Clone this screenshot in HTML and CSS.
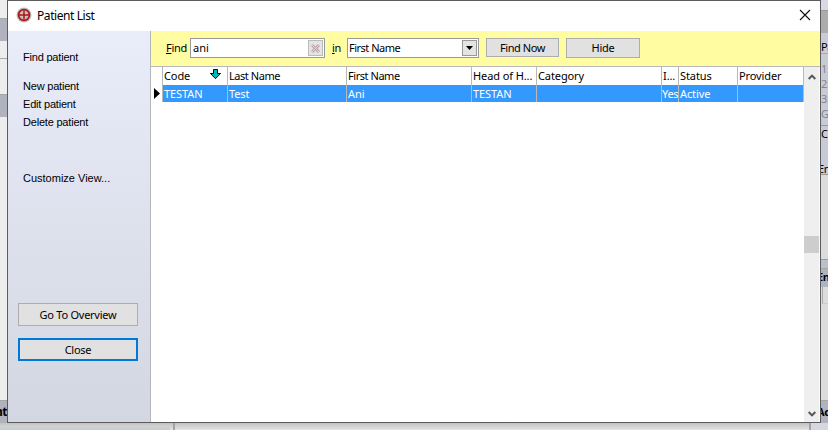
FILE: index.html
```html
<!DOCTYPE html>
<html lang="en">
<head>
<meta charset="utf-8">
<title>Patient List</title>
<link rel="stylesheet" href="styles.css">
</head>
<body>
<div class="desktop">
  <div class="strip left">
    <div class="l1"></div><div class="bar l2"></div><div class="l3"></div><div class="l4"></div><div class="bar l5"></div><div class="l6"></div><div class="bar l7"><b>nt</b></div>
  </div>
  <main class="window">
    <header class="titlebar">
      <svg class="logo" width="16" height="16" viewBox="0 0 16 16"><circle cx="8" cy="8" r="7.5" fill="#bdb9b8"/><circle cx="8" cy="8" r="5.4" fill="#d2bcbb" stroke="#a5191d" stroke-width="1.7"/><path d="M3 8h10M8 3.5v3.2q0 1.3-1.3 1.3M8 12.5V9.3Q8 8 9.3 8" fill="none" stroke="#a5191d" stroke-width="1.5"/></svg>
      <h1>Patient List</h1>
      <svg class="x" width="12" height="12" viewBox="0 0 12 12"><path d="M1 1l10 10M11 1L1 11" stroke="#111" stroke-width="1.1"/></svg>
    </header>
    <div class="content">
      <nav class="sidebar">
        <a class="find">Find patient</a>
        <a>New patient</a>
        <a>Edit patient</a>
        <a>Delete patient</a>
        <a class="customize">Customize View...</a>
        <button class="overview"><span>Go To Overview</span></button>
        <button class="close"><span>Close</span></button>
      </nav>
      <section class="main">
        <div class="search">
          <label class="lf"><u>F</u>ind</label>
          <div class="field"><span>ani</span><i class="clear"><svg width="9" height="9" viewBox="0 0 9 9"><path d="M1 1l7 7M8 1L1 8" stroke="#bda6a6" stroke-width="2.8"/><path d="M1 1l7 7M8 1L1 8" stroke="#e4d4d4" stroke-width="1"/></svg></i></div>
          <label class="li"><u>i</u>n</label>
          <div class="field select"><span>First Name</span><i class="drop"><svg width="7" height="4" viewBox="0 0 7 4"><path d="M0 0h7L3.5 4z"/></svg></i></div>
          <button class="now"><span>Find Now</span></button>
          <button class="hide"><span>Hide</span></button>
        </div>
        <div class="listing">
          <div class="table">
            <div class="row head">
              <span></span><span class="code">Code<svg width="12" height="11" viewBox="0 0 12 11"><path d="M3.5.5h4v4h3L5.5 9.7.5 4.5h3z" fill="#00b8b8" stroke="#000"/></svg></span><span class="name">Last Name</span><span class="name">First Name</span><span class="name">Head of H...</span><span>Category</span><span>I...</span><span>Status</span><span>Provider</span>
            </div>
            <div class="row selected">
              <span class="mark"><svg width="6" height="11" viewBox="0 0 6 11"><path d="M0 0l6 5.5L0 11z"/></svg></span><span>TESTAN</span><span>Test</span><span>Ani</span><span>TESTAN</span><span></span><span class="yes">Yes</span><span>Active</span><span></span>
            </div>
          </div>
          <div class="scroll">
            <svg class="up" width="8" height="6" viewBox="0 0 8 6"><path d="M.7 5L4 1.6 7.3 5" fill="none" stroke="#555" stroke-width="2"/></svg>
            <div class="thumb"></div>
            <svg class="down" width="8" height="6" viewBox="0 0 8 6"><path d="M.7 1L4 4.4 7.3 1" fill="none" stroke="#555" stroke-width="2"/></svg>
          </div>
        </div>
      </section>
    </div>
  </main>
  <div class="strip right">
    <div class="r1"></div><div class="r2"></div><div class="r3">Pa</div><div class="r4"><span>1:</span><span>2:</span><span>3:</span><span>G:</span></div><div class="r5"><span>C</span><span>En</span></div><div class="r6"></div><div class="r7"></div><div class="bar r8"><b>En</b></div><div class="r9"></div><div class="r10"></div><div class="bar r11"><b>Ac</b></div>
  </div>
  <div class="bottom"><div class="b1"></div><div class="b2"></div><div class="b3"></div></div>
</div>
</body>
</html>
```
FILE: styles.css
```css
* { box-sizing: border-box; }
body { margin: 0; overflow: hidden; font: 11px/14px "Noto Sans", sans-serif; color: #000; }
svg { display: block; flex: none; }
.desktop { width: 828px; height: 430px; display: grid; grid-template-columns: 7px 814px 7px; grid-template-rows: 423px 7px; background: #e4e4e4; }
.strip { display: flex; flex-direction: column; overflow: hidden; background: #ededed; }
.strip > div { flex: none; overflow: hidden; white-space: nowrap; }
.bar { background: #b0b3bd; border-top: 1px solid #a6a6a6; }
.l1 { height: 18px; }
.l2 { height: 23px; }
.l3 { height: 18px; border-bottom: 1px solid #aaa; }
.l4 { height: 35px; }
.l5 { height: 23px; }
.l6 { height: 283px; }
.l7 { height: 23px; padding-top: 4px; direction: rtl; }
.left b { font-size: 12px; letter-spacing: -.5px; }
.window { border: 1px solid #5c5c5c; background: #fff; display: flex; flex-direction: column; min-width: 0; }
.titlebar { height: 30px; display: flex; align-items: center; padding: 0 9px 0 8px; }
.titlebar h1 { margin: 0 0 0 5px; font-size: 12px; line-height: 16px; font-weight: 400; letter-spacing: -.42px; flex: 1; }
.logo { margin-top: -2px; }
.x { margin-top: -2px; }
.content { flex: 1; display: flex; min-height: 0; }
.sidebar { width: 143px; padding: 19px 12px 0 10px; border-right: 1px solid #b5b6bb; background: linear-gradient(#e9ecf9, #d3d7e1); display: flex; flex-direction: column; font-family: "Liberation Sans", Arial, sans-serif; font-size: 11px; }
.sidebar a { height: 18px; line-height: 15px; padding-left: 5px; letter-spacing: -.2px; }
.sidebar .find { height: 29px; }
.sidebar .customize { margin-top: 38px; height: 133px; flex: none; letter-spacing: 0; }
button { font: 11px/14px "Noto Sans", sans-serif; letter-spacing: -.25px; padding: 0; color: #000; background: #e1e1e1; border: 1px solid #adadad; border-radius: 0; text-align: center; white-space: nowrap; }
.sidebar button { width: 120px; height: 23px; margin-bottom: 12px; flex: none; }
.sidebar .overview { margin-top: -1px; }
.sidebar .close { border: 2px solid #0078d7; }
.main { flex: 1; display: flex; flex-direction: column; min-width: 0; }
.search { height: 36px; background: #fffca2; border-bottom: 1px solid #b9b9b9; display: flex; align-items: flex-start; padding: 7px 0 0 15px; }
.search label { line-height: 19px; letter-spacing: -.3px; }
.lf { width: 24px; }
.li { width: 15px; }
.field { width: 135px; height: 20px; border: 1px solid #999; background: #fff; display: flex; justify-content: space-between; align-items: center; padding: 0 1px 0 2px; margin-right: 7px; }
.field.select { width: 132px; padding-left: 1px; letter-spacing: -.5px; }
.field i { width: 15px; height: 16px; border: 1px solid #bbb; background: #e4e4e4; display: flex; align-items: center; justify-content: center; }
.field .drop { border-color: #999; }
.search button { width: 73px; height: 19px; }
.search .now { letter-spacing: -.45px; }
.search .hide { width: 74px; height: 20px; margin-left: 7px; }
.listing { flex: 1; display: flex; min-height: 0; }
.table { width: 653px; }
.row { display: grid; grid-template-columns: 12px 65px 119px 125px 65px 125px 17px 59px 66px; height: 18px; line-height: 18px; white-space: nowrap; letter-spacing: -.1px; }
.row > span { border-right: 1px solid #b9b9b9; padding-left: 1px; overflow: hidden; }
.head .name { letter-spacing: -.45px; }
.head .name + .name + .name { letter-spacing: -.1px; }
.head .code { display: flex; justify-content: space-between; padding-right: 5px; }
.code svg { margin-top: 2px; }
.selected { height: 17px; line-height: 17px; background: #3399ff; color: #fff; }
.row > .mark { background: #fff; padding: 3px 0 0 3px; }
.selected > .yes { padding-left: 0; letter-spacing: -.3px; }
.scroll { flex: 1; background: #efefef; border-right: 1px solid #fafafa; display: flex; flex-direction: column; align-items: center; padding: 7px 0 5px; }
.thumb { width: 15px; height: 17px; margin: 156px 0 auto; background: #cdcdcd; }
.right { background: #dcdcdc; font-size: 11px; letter-spacing: -.3px; }
.r1 { height: 10px; background: #d8d9e4; }
.r2 { height: 23px; background: #acacac; border-top: 1px solid #999; }
.r3 { height: 21px; padding-top: 7px; line-height: 14px; background: #c8cbd8; border-bottom: 1px solid #aaa; }
.r4 { height: 71px; padding-top: 7px; color: #85868d; background: #c8cad6; }
.r4 span, .r5 span { display: block; height: 15px; line-height: 15px; }
.r5 { height: 50px; border: solid #999; border-width: 1px 0; background: #c8cad6; }
.r5 span:last-child { margin-top: 20px; margin-left: -3px; }
.r6 { height: 84px; }
.r7 { height: 9px; border-top: 1px solid #999; background: #bcc0ca; }
.r8 { height: 19px; padding-top: 1px; }
.r8 b, .r11 b { margin-left: -4px; }
.r9 { height: 17px; margin-left: 1px; border-left: 1px solid #aaa; border-bottom: 1px solid #ccc; }
.r10 { height: 96px; }
.r11 { height: 23px; padding-top: 4px; }
.bottom { grid-column: 1 / 4; display: flex; background: linear-gradient(#c2c2c2, #e3e3e3); }
.b1 { width: 170px; margin-top: 4px; background: #c7d0d0; }
.b2 { width: 638px; margin-left: 3px; border: solid #a3a3a3; border-width: 0 2px; }
.b3 { flex: 1; background: #d5d7e2; }
```
